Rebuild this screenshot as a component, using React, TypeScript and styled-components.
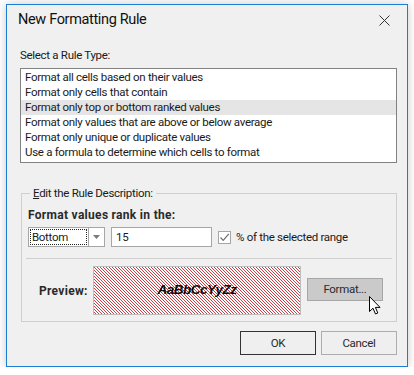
import React from "react";
import styled, { createGlobalStyle } from "styled-components";

const GlobalStyle = createGlobalStyle`
  html, body { margin: 0; padding: 0; background: #ffffff; }
  body {
    font-family: Roboto, "Liberation Sans", sans-serif;
    font-size: 11.5px;
    letter-spacing: -0.3px;
    color: #1a1a1a;
  }
  * { box-sizing: border-box; }
`;

const Window = styled.div`
  margin: 4px 0 0 6px;
  width: 402px;
  height: 363px;
  border: 1px solid #1a7fd4;
  background: #f0f0f0;
  box-shadow: 0 0 9px rgba(0, 0, 0, 0.22);
  display: flex;
  flex-direction: column;
`;

const TitleBar = styled.div`
  height: 30px;
  flex: none;
  display: flex;
  align-items: center;
  justify-content: space-between;
  padding: 0 17px 0 11px;
`;

const Title = styled.div`
  font-size: 14.5px;
  letter-spacing: -0.35px;
  color: #111;
  line-height: 20px;
`;

const Body = styled.div`
  padding: 0 10px 0 13px;
  display: flex;
  flex-direction: column;
`;

const SectionLabel = styled.div`
  margin-top: 13px;
  height: 15px;
  line-height: 15px;
`;

const ListBox = styled.div`
  margin-top: 5px;
  height: 95px;
  border: 1px solid #828282;
  background: #fff;
  padding-top: 1px;
`;

const ListItem = styled.div<{ $selected?: boolean }>`
  height: 15px;
  line-height: 15px;
  padding-left: 4px;
  background: ${(p) => (p.$selected ? "#e5e5e5" : "transparent")};
  white-space: nowrap;
`;

const GroupBox = styled.div`
  position: relative;
  margin: 30px 0 0 1px;
  border: 1px solid #cfcfcf;
  padding: 0 4px 6px 4px;
`;

const GroupCaption = styled.div`
  position: absolute;
  top: -8px;
  left: 8px;
  padding: 0 3px;
  background: #f0f0f0;
  line-height: 15px;
`;

const BoldLabel = styled.div`
  margin: 14px 0 0 2px;
  font-size: 12px;
  font-weight: 700;
  letter-spacing: 0.3px;
  line-height: 15px;
  height: 15px;
  color: #2a2a2a;
`;

const RankRow = styled.div`
  margin: 4px 0 0 2px;
  height: 20px;
  display: flex;
  align-items: center;
`;

const Combo = styled.div`
  width: 77px;
  height: 20px;
  border: 1px solid #a6a6a6;
  background: #fff;
  display: flex;
`;

const ComboText = styled.div`
  flex: 1;
  margin: 1px;
  border: 1px dotted #222;
  line-height: 14px;
  padding-left: 1px;
`;

const ComboButton = styled.div`
  width: 16px;
  border-left: 1px solid #a6a6a6;
  display: flex;
  align-items: center;
  justify-content: center;
`;

const TextInput = styled.div`
  margin-left: 6px;
  width: 101px;
  height: 20px;
  border: 1px solid #a6a6a6;
  background: #fff;
  line-height: 18px;
  padding-left: 4px;
`;

const CheckBox = styled.div`
  margin-left: 6px;
  width: 13px;
  height: 13px;
  border: 1px solid #a6a6a6;
  background: #fff;
  display: flex;
  align-items: center;
  justify-content: center;
`;

const CheckLabel = styled.div`
  margin-left: 5px;
  line-height: 15px;
`;

const Separator = styled.div`
  margin: 11px 0 0 0;
  height: 1px;
  background: #cfcfcf;
`;

const PreviewRow = styled.div`
  margin-top: 7px;
  height: 49px;
  display: flex;
  align-items: center;
  padding-left: 13px;
`;

const PreviewLabel = styled.div`
  width: 54px;
  font-size: 12px;
  font-weight: 700;
  letter-spacing: 0.3px;
  color: #2a2a2a;
`;

const PreviewBox = styled.div`
  width: 208px;
  height: 49px;
  border: 1px solid #bdbdbd;
  background-color: #ffffff;
  background-image: linear-gradient(
    45deg,
    #cc4045 0%,
    #cc4045 13%,
    transparent 13%,
    transparent 50%,
    #cc4045 50%,
    #cc4045 63%,
    transparent 63%,
    transparent 100%
  );
  background-size: 3px 3px;
  display: flex;
  align-items: center;
  justify-content: center;
`;

const PreviewText = styled.span`
  font-family: "Liberation Sans", Arial, sans-serif;
  font-weight: 700;
  font-style: italic;
  font-size: 13.5px;
  letter-spacing: -0.5px;
  color: #0a0a0a;
  margin-top: -3px;
`;

const FormatButtonWrap = styled.div`
  position: relative;
  margin-left: 6px;
  margin-top: -3px;
`;

const FormatButton = styled.div`
  width: 76px;
  height: 23px;
  border: 1px solid #a6a6a6;
  background: #cacaca;
  display: flex;
  align-items: center;
  justify-content: center;
  color: #2a2a2a;
`;

const Cursor = styled.svg`
  position: absolute;
  left: 62px;
  top: 18px;
`;

const ButtonRow = styled.div`
  margin-top: 9px;
  display: flex;
  justify-content: flex-end;
  gap: 5px;
`;

const DialogButton = styled.div<{ $default?: boolean }>`
  width: 76px;
  height: 24px;
  border: 1px solid ${(p) => (p.$default ? "#333333" : "#adadad")};
  background: #efefef;
  display: flex;
  align-items: center;
  justify-content: center;
  color: #2a2a2a;
`;

const items = [
  "Format all cells based on their values",
  "Format only cells that contain",
  "Format only top or bottom ranked values",
  "Format only values that are above or below average",
  "Format only unique or duplicate values",
  "Use a formula to determine which cells to format",
];

export default function App() {
  return (
    <>
      <GlobalStyle />
      <Window>
        <TitleBar>
          <Title>New Formatting Rule</Title>
          <svg width="11" height="11" viewBox="0 0 11 11">
            <path d="M0.5 0.5 L10.5 10.5 M10.5 0.5 L0.5 10.5" stroke="#333" strokeWidth="1" fill="none" />
          </svg>
        </TitleBar>
        <Body>
          <SectionLabel>Select a Rule Type:</SectionLabel>
          <ListBox>
            {items.map((t, i) => (
              <ListItem key={t} $selected={i === 2}>
                {t}
              </ListItem>
            ))}
          </ListBox>
          <GroupBox>
            <GroupCaption>
              <u>E</u>dit the Rule Description:
            </GroupCaption>
            <BoldLabel>Format values rank in the:</BoldLabel>
            <RankRow>
              <Combo>
                <ComboText>Bottom</ComboText>
                <ComboButton>
                  <svg width="7" height="4" viewBox="0 0 7 4">
                    <path d="M0 0 L7 0 L3.5 4 Z" fill="#7a7a7a" />
                  </svg>
                </ComboButton>
              </Combo>
              <TextInput>15</TextInput>
              <CheckBox>
                <svg width="11" height="11" viewBox="0 0 11 11">
                  <path d="M1.5 5.5 L4.2 8.3 L9.8 1.8" stroke="#6e6e6e" strokeWidth="1.2" fill="none" />
                </svg>
              </CheckBox>
              <CheckLabel>% of the selected range</CheckLabel>
            </RankRow>
            <Separator />
            <PreviewRow>
              <PreviewLabel>Preview:</PreviewLabel>
              <PreviewBox>
                <PreviewText>AaBbCcYyZz</PreviewText>
              </PreviewBox>
              <FormatButtonWrap>
                <FormatButton>Format...</FormatButton>
                <Cursor width="12" height="19" viewBox="0 0 12 19">
                  <path
                    d="M0.5 0.5 L0.5 15.5 L4 12.2 L6.5 18 L8.8 17 L6.4 11.4 L11 11.4 Z"
                    fill="#fff"
                    stroke="#000"
                    strokeWidth="1"
                    strokeLinejoin="miter"
                  />
                </Cursor>
              </FormatButtonWrap>
            </PreviewRow>
          </GroupBox>
          <ButtonRow>
            <DialogButton $default>OK</DialogButton>
            <DialogButton>Cancel</DialogButton>
          </ButtonRow>
        </Body>
      </Window>
    </>
  );
}
